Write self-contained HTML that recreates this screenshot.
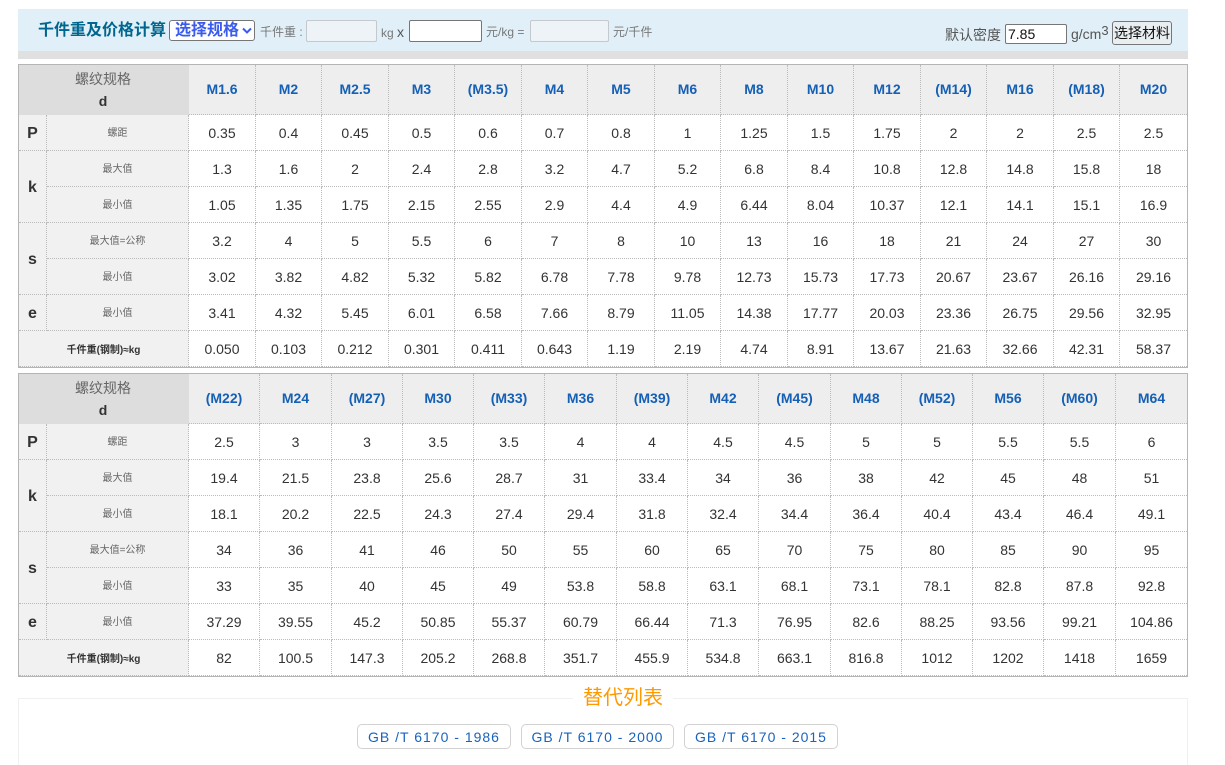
<!DOCTYPE html>
<html lang="zh">
<head>
<meta charset="utf-8">
<title>GB/T 6170</title>
<style>
html,body{margin:0;padding:0;background:#fff;width:1225px;height:765px;overflow:hidden;}
body{position:relative;font-family:"Liberation Sans","Noto Sans CJK SC",sans-serif;color:#333;font-size:14px;}
.abs{position:absolute;white-space:nowrap;}
.bar{left:18px;top:9px;width:1170px;height:42px;background:#e1f0f8;}
.bar2{left:18px;top:51px;width:1170px;height:8px;background:#e0e0e0;}
.title{left:38px;top:20px;font-size:16px;font-weight:bold;color:#00668f;line-height:22px;}
.sel{left:169px;top:20px;width:84px;height:19px;border:1px solid #767676;border-radius:3px;background:#fff;color:#3a5bee;font-size:16px;font-weight:bold;line-height:19px;box-sizing:content-box;}
.sel span{position:absolute;left:5px;top:0;}
.sel svg{position:absolute;left:72px;top:6px;}
.lbl{color:#777;font-size:12px;line-height:16px;top:24px;}
.ro{top:20px;height:20px;background:#edf3f6;border:1px solid #c3c9cc;border-radius:2px;}
.inp{top:20px;height:20px;background:#fff;border:1px solid #767676;border-radius:2px;}
table{position:absolute;left:18px;width:1170px;border:1px solid #b5b5b5;border-collapse:separate;border-spacing:0;table-layout:fixed;}
td{padding:0;height:35px;border-right:1px dotted #bbb;border-bottom:1px dotted #bbb;text-align:center;vertical-align:middle;font-size:14px;line-height:16px;color:#333;overflow:hidden;white-space:nowrap;}
td:last-child{border-right:0;}
tr.h td{height:47px;padding-bottom:2px;background:#eee;color:#1560b5;font-weight:bold;}
tr.h td.c{background:#ddd;border-right:0;border-bottom:0;height:50px;padding:0 2px 0 0;color:#666;font-weight:normal;line-height:22px;}
tr.h td.c b{color:#333;}
td.k{background:#f1f1f1;font-size:16px;font-weight:bold;color:#333;padding-top:2px;height:33px;}
td.n{background:#f1f1f1;font-size:10px;color:#666;padding-top:2px;height:33px;}
td.w{background:#f1f1f1;font-size:10px;font-weight:bold;color:#333;padding-top:4px;height:31px;}
.box{left:18px;top:698px;width:1168px;height:80px;border:1px solid #f0f0f0;}
.leg{left:573px;top:685px;width:100px;height:26px;line-height:26px;background:#fff;text-align:center;color:#f90;font-size:20px;}
.btn{top:724px;height:23px;line-height:25px;border:1px solid #d2d2d2;border-radius:5px;text-align:center;color:#1863bd;font-size:14px;letter-spacing:1px;background:#fff;}
</style>
</head>
<body>
<div class="abs bar"></div>
<div class="abs bar2"></div>
<div class="abs title">千件重及价格计算</div>
<div class="abs sel"><span>选择规格</span><svg width="10" height="7" viewBox="0 0 10 7"><path d="M1 1.5 L5 5.5 L9 1.5" fill="none" stroke="#3a5bee" stroke-width="2"/></svg></div>
<div class="abs lbl" style="left:260px">千件重 :</div>
<div class="abs ro" style="left:306px;width:69px"></div>
<div class="abs lbl" style="left:381px">kg <span style="font-size:14px;color:#555">x</span></div>
<div class="abs inp" style="left:409px;width:71px"></div>
<div class="abs lbl" style="left:486px">元/kg =</div>
<div class="abs ro" style="left:530px;width:77px"></div>
<div class="abs lbl" style="left:613px">元/千件</div>
<div class="abs" style="left:945px;top:26px;line-height:18px;color:#555">默认密度</div>
<div class="abs" style="left:1005px;top:24px;width:60px;height:18px;background:#fff;border:1px solid #767676;border-radius:2px;color:#111;line-height:18px;text-indent:2px">7.85</div>
<div class="abs" style="left:1071px;top:25px;line-height:18px;color:#555">g/cm<sup style="font-size:13px;line-height:0;vertical-align:4px">3</sup></div>
<div class="abs" style="left:1112px;top:21px;width:58px;height:22px;background:#e9eef1;border:1px solid #767676;border-radius:3px;color:#111;line-height:22px;text-align:center">选择材料</div>

<table style="top:64px">
<colgroup><col style="width:28px"><col style="width:142px"><col style="width:67px"><col style="width:66px"><col style="width:67px"><col style="width:66px"><col style="width:67px"><col style="width:66px"><col style="width:67px"><col style="width:66px"><col style="width:67px"><col style="width:66px"><col style="width:67px"><col style="width:66px"><col style="width:67px"><col style="width:66px"><col style="width:67px"></colgroup>
<tr class="h"><td class="c" colspan="2">螺纹规格<br><b>d</b></td><td>M1.6</td><td>M2</td><td>M2.5</td><td>M3</td><td>(M3.5)</td><td>M4</td><td>M5</td><td>M6</td><td>M8</td><td>M10</td><td>M12</td><td>(M14)</td><td>M16</td><td>(M18)</td><td>M20</td></tr>
<tr><td class="k">P</td><td class="n">螺距</td><td>0.35</td><td>0.4</td><td>0.45</td><td>0.5</td><td>0.6</td><td>0.7</td><td>0.8</td><td>1</td><td>1.25</td><td>1.5</td><td>1.75</td><td>2</td><td>2</td><td>2.5</td><td>2.5</td></tr>
<tr><td class="k" rowspan="2">k</td><td class="n">最大值</td><td>1.3</td><td>1.6</td><td>2</td><td>2.4</td><td>2.8</td><td>3.2</td><td>4.7</td><td>5.2</td><td>6.8</td><td>8.4</td><td>10.8</td><td>12.8</td><td>14.8</td><td>15.8</td><td>18</td></tr>
<tr><td class="n">最小值</td><td>1.05</td><td>1.35</td><td>1.75</td><td>2.15</td><td>2.55</td><td>2.9</td><td>4.4</td><td>4.9</td><td>6.44</td><td>8.04</td><td>10.37</td><td>12.1</td><td>14.1</td><td>15.1</td><td>16.9</td></tr>
<tr><td class="k" rowspan="2">s</td><td class="n">最大值=公称</td><td>3.2</td><td>4</td><td>5</td><td>5.5</td><td>6</td><td>7</td><td>8</td><td>10</td><td>13</td><td>16</td><td>18</td><td>21</td><td>24</td><td>27</td><td>30</td></tr>
<tr><td class="n">最小值</td><td>3.02</td><td>3.82</td><td>4.82</td><td>5.32</td><td>5.82</td><td>6.78</td><td>7.78</td><td>9.78</td><td>12.73</td><td>15.73</td><td>17.73</td><td>20.67</td><td>23.67</td><td>26.16</td><td>29.16</td></tr>
<tr><td class="k">e</td><td class="n">最小值</td><td>3.41</td><td>4.32</td><td>5.45</td><td>6.01</td><td>6.58</td><td>7.66</td><td>8.79</td><td>11.05</td><td>14.38</td><td>17.77</td><td>20.03</td><td>23.36</td><td>26.75</td><td>29.56</td><td>32.95</td></tr>
<tr><td class="w" colspan="2">千件重(钢制)≈kg</td><td>0.050</td><td>0.103</td><td>0.212</td><td>0.301</td><td>0.411</td><td>0.643</td><td>1.19</td><td>2.19</td><td>4.74</td><td>8.91</td><td>13.67</td><td>21.63</td><td>32.66</td><td>42.31</td><td>58.37</td></tr>
</table>

<table style="top:373px">
<colgroup><col style="width:28px"><col style="width:142px"><col style="width:71px"><col style="width:72px"><col style="width:71px"><col style="width:71px"><col style="width:71px"><col style="width:72px"><col style="width:71px"><col style="width:71px"><col style="width:72px"><col style="width:71px"><col style="width:71px"><col style="width:71px"><col style="width:72px"><col style="width:71px"></colgroup>
<tr class="h"><td class="c" colspan="2">螺纹规格<br><b>d</b></td><td>(M22)</td><td>M24</td><td>(M27)</td><td>M30</td><td>(M33)</td><td>M36</td><td>(M39)</td><td>M42</td><td>(M45)</td><td>M48</td><td>(M52)</td><td>M56</td><td>(M60)</td><td>M64</td></tr>
<tr><td class="k">P</td><td class="n">螺距</td><td>2.5</td><td>3</td><td>3</td><td>3.5</td><td>3.5</td><td>4</td><td>4</td><td>4.5</td><td>4.5</td><td>5</td><td>5</td><td>5.5</td><td>5.5</td><td>6</td></tr>
<tr><td class="k" rowspan="2">k</td><td class="n">最大值</td><td>19.4</td><td>21.5</td><td>23.8</td><td>25.6</td><td>28.7</td><td>31</td><td>33.4</td><td>34</td><td>36</td><td>38</td><td>42</td><td>45</td><td>48</td><td>51</td></tr>
<tr><td class="n">最小值</td><td>18.1</td><td>20.2</td><td>22.5</td><td>24.3</td><td>27.4</td><td>29.4</td><td>31.8</td><td>32.4</td><td>34.4</td><td>36.4</td><td>40.4</td><td>43.4</td><td>46.4</td><td>49.1</td></tr>
<tr><td class="k" rowspan="2">s</td><td class="n">最大值=公称</td><td>34</td><td>36</td><td>41</td><td>46</td><td>50</td><td>55</td><td>60</td><td>65</td><td>70</td><td>75</td><td>80</td><td>85</td><td>90</td><td>95</td></tr>
<tr><td class="n">最小值</td><td>33</td><td>35</td><td>40</td><td>45</td><td>49</td><td>53.8</td><td>58.8</td><td>63.1</td><td>68.1</td><td>73.1</td><td>78.1</td><td>82.8</td><td>87.8</td><td>92.8</td></tr>
<tr><td class="k">e</td><td class="n">最小值</td><td>37.29</td><td>39.55</td><td>45.2</td><td>50.85</td><td>55.37</td><td>60.79</td><td>66.44</td><td>71.3</td><td>76.95</td><td>82.6</td><td>88.25</td><td>93.56</td><td>99.21</td><td>104.86</td></tr>
<tr><td class="w" colspan="2">千件重(钢制)≈kg</td><td>82</td><td>100.5</td><td>147.3</td><td>205.2</td><td>268.8</td><td>351.7</td><td>455.9</td><td>534.8</td><td>663.1</td><td>816.8</td><td>1012</td><td>1202</td><td>1418</td><td>1659</td></tr>
</table>

<div class="abs box"></div>
<div class="abs leg">替代列表</div>
<div class="abs btn" style="left:357px;width:152px">GB /T 6170 - 1986</div>
<div class="abs btn" style="left:521px;width:151px">GB /T 6170 - 2000</div>
<div class="abs btn" style="left:684px;width:152px">GB /T 6170 - 2015</div>
</body>
</html>
